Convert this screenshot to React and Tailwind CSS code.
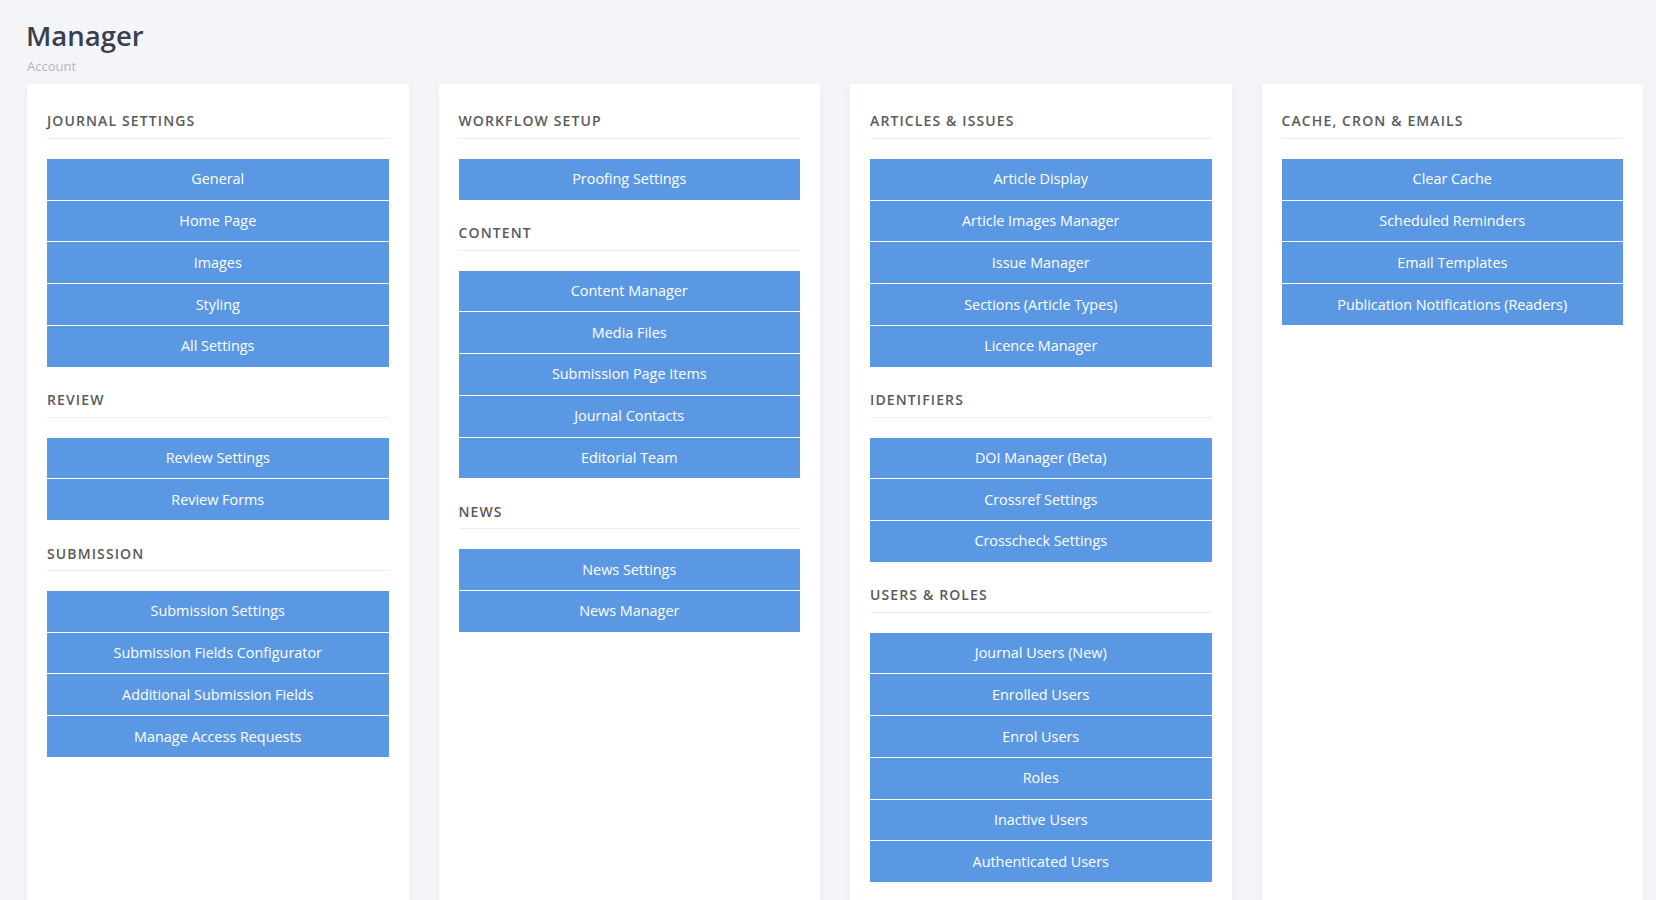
import React from "react";

const columns = [
  [
    { title: "Journal Settings", items: ["General", "Home Page", "Images", "Styling", "All Settings"] },
    { title: "Review", items: ["Review Settings", "Review Forms"] },
    {
      title: "Submission",
      items: ["Submission Settings", "Submission Fields Configurator", "Additional Submission Fields", "Manage Access Requests"],
    },
  ],
  [
    { title: "Workflow Setup", items: ["Proofing Settings"] },
    {
      title: "Content",
      items: ["Content Manager", "Media Files", "Submission Page Items", "Journal Contacts", "Editorial Team"],
    },
    { title: "News", items: ["News Settings", "News Manager"] },
  ],
  [
    {
      title: "Articles & Issues",
      items: ["Article Display", "Article Images Manager", "Issue Manager", "Sections (Article Types)", "Licence Manager"],
    },
    { title: "Identifiers", items: ["DOI Manager (Beta)", "Crossref Settings", "Crosscheck Settings"] },
    {
      title: "Users & Roles",
      items: ["Journal Users (New)", "Enrolled Users", "Enrol Users", "Roles", "Inactive Users", "Authenticated Users"],
    },
  ],
  [
    {
      title: "Cache, Cron & Emails",
      items: ["Clear Cache", "Scheduled Reminders", "Email Templates", "Publication Notifications (Readers)"],
    },
  ],
];

function Section({ title, items, first }) {
  return (
    <div className={first ? "" : "mt-[23.5px]"}>
      <h3 className="text-[14px] leading-5 font-semibold uppercase tracking-[0.08em] text-[#5a5a5a] pb-[6.4px] border-b border-[#eeeeee] mb-5">
        {title}
      </h3>
      <div className="flex flex-col gap-px">
        {items.map((it) => (
          <a
            key={it}
            href="#"
            className="h-[40.75px] flex items-center justify-center bg-[#5b98e4] text-white text-[14.4px] leading-5"
          >
            {it}
          </a>
        ))}
      </div>
    </div>
  );
}

export default function App() {
  return (
    <div
      className="min-h-screen bg-[#f4f5f9] pt-5 pl-[27px]"
      style={{ fontFamily: '"Open Sans", "Noto Sans", sans-serif' }}
    >
      <h1 className="text-[27.5px] leading-[32px] font-semibold text-[#3a3f4f] -ml-px">Manager</h1>
      <div className="text-[13px] leading-[18px] text-[#b3b5ba] mt-[4.6px]">Account</div>
      <div className="flex gap-[30px] mt-[9.4px] items-stretch">
        {columns.map((sections, i) => (
          <div
            key={i}
            className="w-[381.5px] bg-white px-5 pt-[27.5px] pb-8 min-h-[830px] shadow-[0_0_12px_rgba(30,40,80,0.04)]"
          >
            {sections.map((s, j) => (
              <Section key={s.title} title={s.title} items={s.items} first={j === 0} />
            ))}
          </div>
        ))}
      </div>
    </div>
  );
}
